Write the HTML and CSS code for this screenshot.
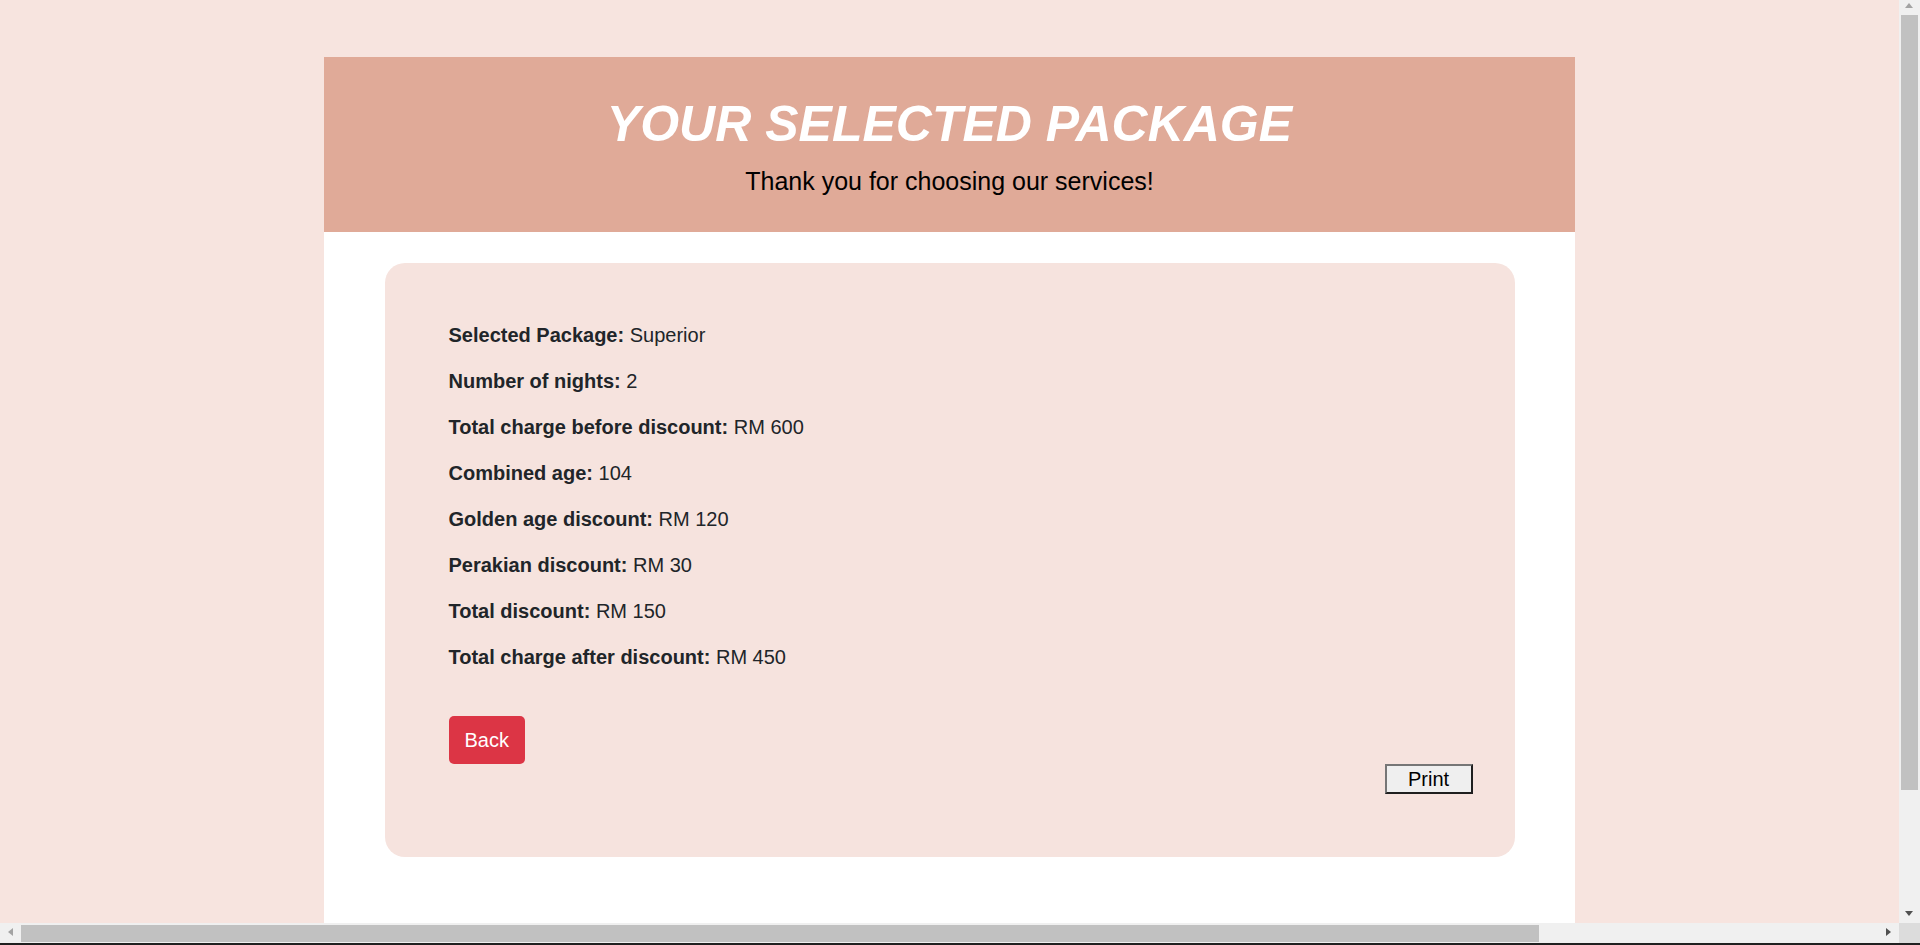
FILE: index.html
```html
<!DOCTYPE html>
<html lang="en">
<head>
<meta charset="utf-8">
<title>Your Selected Package</title>
<link rel="stylesheet" href="styles.css">
</head>
<body>
<div class="page">
  <header class="hero">
    <h1 class="hero-title">YOUR SELECTED PACKAGE</h1>
    <p class="hero-sub">Thank you for choosing our services!</p>
  </header>
  <main class="content">
    <section class="summary">
      <p class="line"><strong>Selected Package:</strong> Superior</p>
      <p class="line"><strong>Number of nights:</strong> 2</p>
      <p class="line"><strong>Total charge before discount:</strong> RM 600</p>
      <p class="line"><strong>Combined age:</strong> 104</p>
      <p class="line"><strong>Golden age discount:</strong> RM 120</p>
      <p class="line"><strong>Perakian discount:</strong> RM 30</p>
      <p class="line"><strong>Total discount:</strong> RM 150</p>
      <p class="line"><strong>Total charge after discount:</strong> RM 450</p>
      <div class="actions">
        <a class="btn-back" href="#">Back</a>
      </div>
      <div class="print-row">
        <button class="btn-print" type="button">Print</button>
      </div>
    </section>
  </main>
</div>
<div class="overflow-spacer"></div>

<div class="sb-v" aria-hidden="true">
  <span class="sb-arrow up"></span>
  <span class="sb-v-thumb"></span>
  <span class="sb-arrow down"></span>
</div>
<div class="sb-h" aria-hidden="true">
  <span class="sb-arrow left"></span>
  <span class="sb-h-thumb"></span>
  <span class="sb-arrow right"></span>
</div>
<div class="sb-corner" aria-hidden="true"></div>
<div class="frame-edge" aria-hidden="true"></div>
</body>
</html>
```

FILE: styles.css
```css
html, body {
  margin: 0;
  padding: 0;
}

body {
  background: #f7e4df;
  font-family: "Liberation Sans", Arial, sans-serif;
  color: #212529;
}

.page {
  width: 1251px;
  margin: 57px 0 0 324px;
  background: #ffffff;
  padding-bottom: 216px;
}

.hero {
  background: #e0aa98;
  text-align: center;
  padding: 37px 0 33px;
}

.hero-title {
  margin: 0 0 9px;
  font-size: 50px;
  line-height: 1.2;
  font-weight: 700;
  font-style: italic;
  color: #ffffff;
}

.hero-sub {
  margin: 0;
  font-size: 25px;
  line-height: 36px;
  color: #000000;
}

.content {
  padding-top: 31px;
}

.summary {
  width: 1130px;
  margin: 0 auto;
  box-sizing: border-box;
  background: #f6e3de;
  border-radius: 20px;
  padding: 57px 42px 63px 64px;
}

.line {
  margin: 0 0 16px;
  font-size: 20px;
  line-height: 30px;
}

.line strong {
  font-weight: 700;
}

.actions {
  margin-top: 44px;
  display: flex;
}

.btn-back {
  display: inline-block;
  background: #dc3545;
  color: #ffffff;
  text-decoration: none;
  font-size: 20px;
  line-height: 30px;
  padding: 9px 16px;
  border-radius: 5px;
}

.print-row {
  display: flex;
  justify-content: flex-end;
}

.btn-print {
  width: 88px;
  height: 30px;
  margin: 0;
  padding: 0;
  font-family: "Liberation Sans", Arial, sans-serif;
  font-size: 20px;
  line-height: 24px;
  color: #000000;
  background: #efefef;
  border-style: solid;
  border-width: 2px;
  border-color: #767676 #1f1f1f #1f1f1f #767676;
}

.overflow-spacer {
  width: 2343px;
  height: 0;
}

/* browser window scrollbars drawn over the page */
.sb-v {
  position: fixed;
  top: 0;
  right: 0;
  width: 21px;
  height: 923px;
  background: #f0f0f0;
}

.sb-v-thumb {
  position: absolute;
  left: 2px;
  right: 2px;
  top: 15px;
  height: 775px;
  background: #c1c1c1;
}

.sb-h {
  position: fixed;
  left: 0;
  bottom: 2px;
  width: 1899px;
  height: 20px;
  background: #f0f0f0;
}

.sb-h-thumb {
  position: absolute;
  top: 2px;
  bottom: 1px;
  left: 21px;
  width: 1518px;
  background: #c1c1c1;
}

.sb-corner {
  position: fixed;
  right: 0;
  bottom: 2px;
  width: 21px;
  height: 20px;
  background: #dcdcdc;
}

.frame-edge {
  position: fixed;
  left: 0;
  right: 0;
  bottom: 0;
  height: 2px;
  background: #202020;
}

.sb-arrow {
  position: absolute;
  width: 0;
  height: 0;
  border: 4px solid transparent;
}

.sb-arrow.up {
  top: 3px;
  left: 6px;
  border-top-width: 0;
  border-left-width: 4.5px;
  border-right-width: 4.5px;
  border-bottom: 5px solid #a3a3a3;
}

.sb-arrow.down {
  bottom: 7px;
  left: 6px;
  border-bottom-width: 0;
  border-left-width: 4.5px;
  border-right-width: 4.5px;
  border-top: 5px solid #505050;
}

.sb-arrow.left {
  top: 5px;
  left: 8px;
  border-left-width: 0;
  border-top-width: 4.5px;
  border-bottom-width: 4.5px;
  border-right: 5px solid #a3a3a3;
}

.sb-arrow.right {
  top: 5px;
  right: 8px;
  border-right-width: 0;
  border-top-width: 4.5px;
  border-bottom-width: 4.5px;
  border-left: 5px solid #505050;
}
```
